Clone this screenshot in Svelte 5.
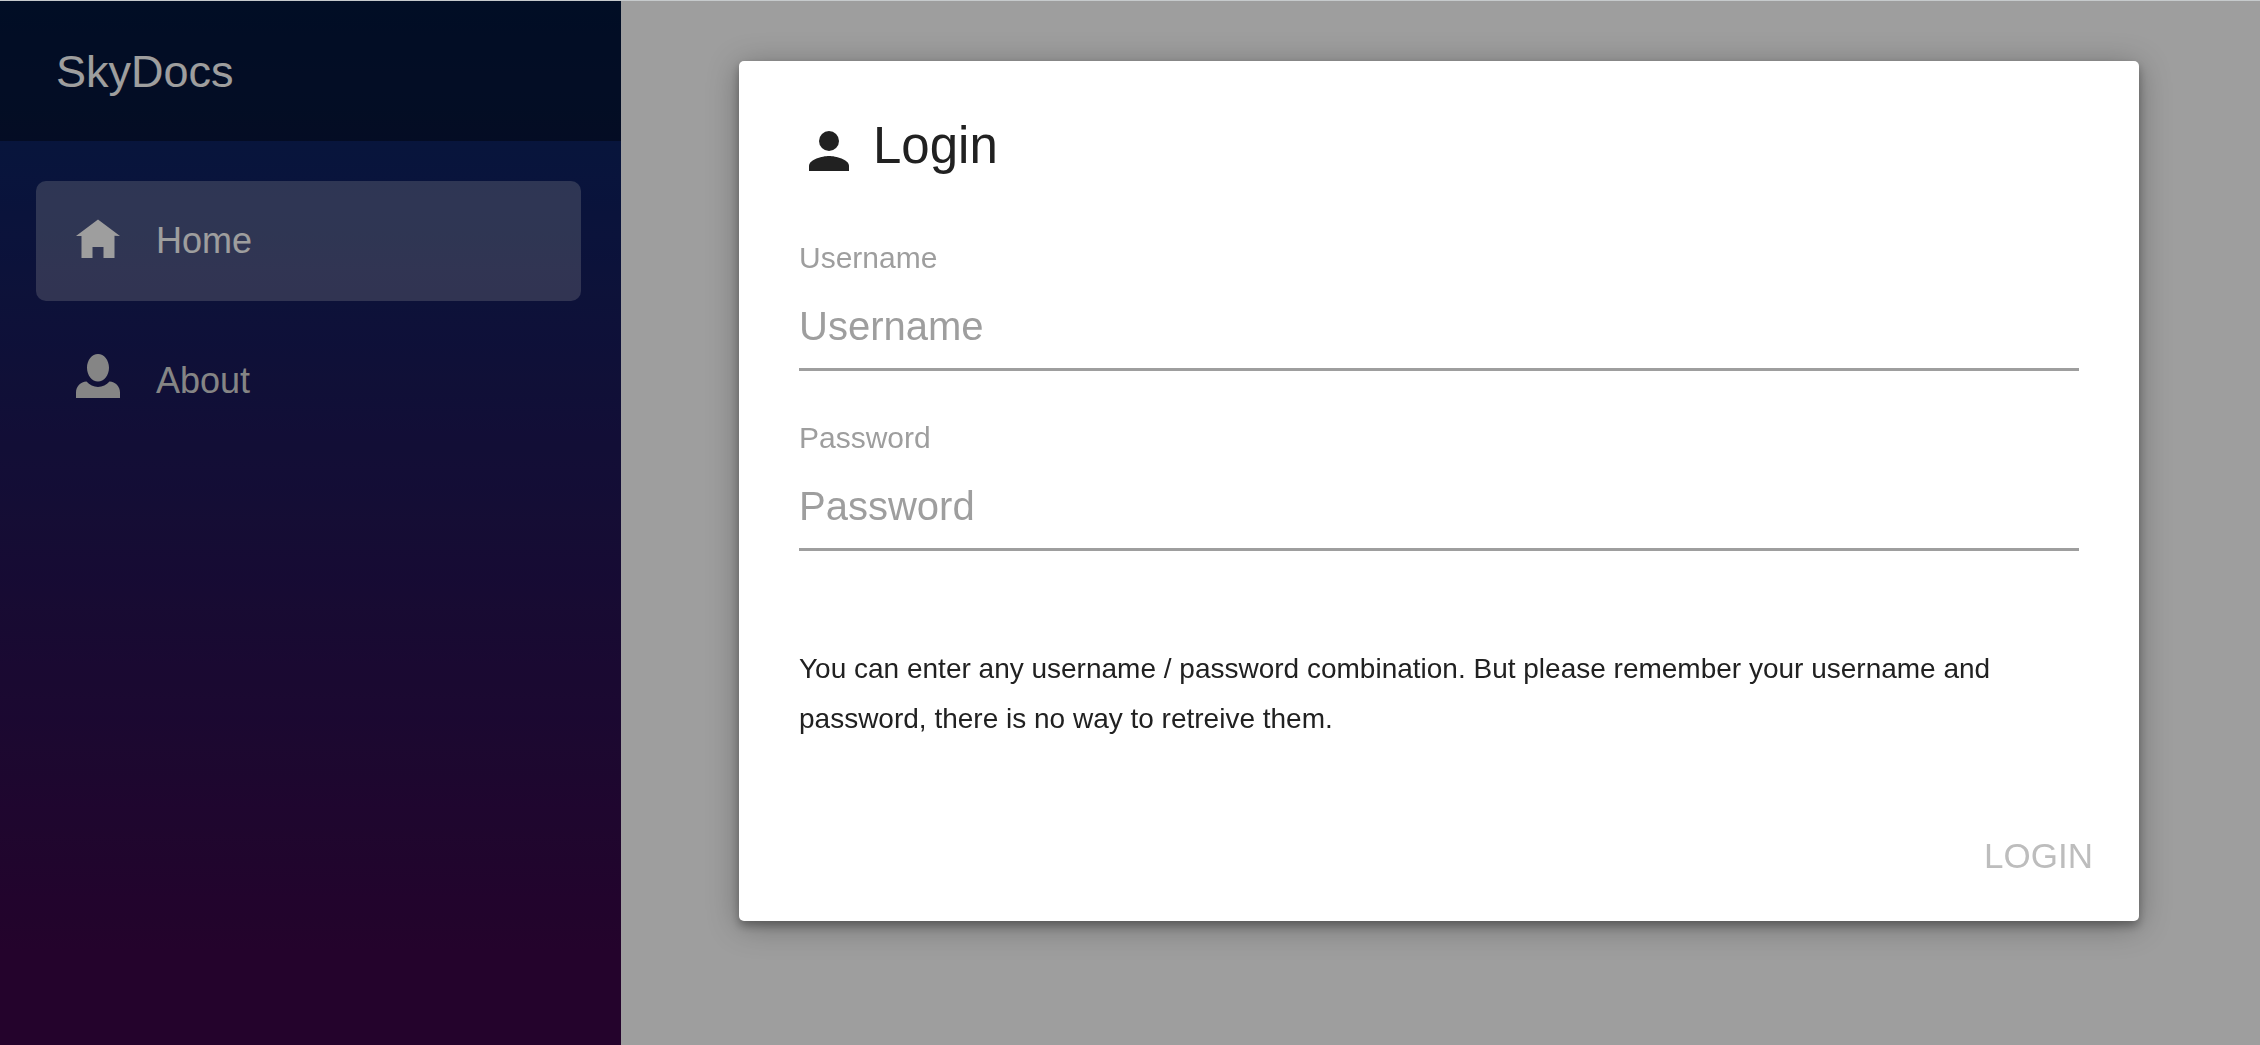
<script>
  let username = $state('');
  let password = $state('');
  const ready = $derived(username !== '' && password !== '');
</script>

<div class="page">
  <aside class="sidebar">
    <a class="brand" href="#home">SkyDocs</a>
    <nav>
      <a class="item active" href="#home" aria-current="page">
        <svg viewBox="0 -1 8 8" aria-hidden="true"><path d="M4 0l-4 3h1v4h2v-2h2v2h2v-4.03l1 .03-4-3z" /></svg>
        <span>Home</span>
      </a>
      <a class="item" href="#about">
        <svg viewBox="0 0 8 8" aria-hidden="true"><path d="M4 0c-1.1 0-2 1.12-2 2.5s.9 2.5 2 2.5 2-1.12 2-2.5-.9-2.5-2-2.5zm-2.09 5c-1.06.05-1.91.92-1.91 2v1h8v-1c0-1.08-.84-1.95-1.91-2-.54.61-1.28 1-2.09 1-.81 0-1.55-.39-2.09-1z" /></svg>
        <span>About</span>
      </a>
    </nav>
  </aside>

  <div class="backdrop"></div>

  <main>
    <form class="dialog" role="dialog" aria-labelledby="title" onsubmit={(e) => e.preventDefault()}>
      <header>
        <svg viewBox="0 0 24 24" aria-hidden="true"><circle cx="12" cy="8" r="4" /><path d="M12 14c-2.67 0-8 1.34-8 4v2h16v-2c0-2.66-5.33-4-8-4z" /></svg>
        <h1 id="title">Login</h1>
      </header>
      <div class="field">
        <label for="username">Username</label>
        <input id="username" type="text" placeholder="Username" bind:value={username} />
      </div>
      <div class="field">
        <label for="password">Password</label>
        <input id="password" type="password" placeholder="Password" bind:value={password} />
      </div>
      <p>You can enter any username / password combination. But please remember your username and password, there is no way to retreive them.</p>
      <footer>
        <button type="submit" disabled={!ready}>LOGIN</button>
      </footer>
    </form>
  </main>
</div>

<style>
  :global(body) {
    margin: 0;
    font-family: "Liberation Sans", Arial, sans-serif;
  }

  .page {
    display: flex;
    box-sizing: border-box;
    min-height: 100vh;
    border-top: 1px solid #c6cacc;
    background: #fff;
  }

  .sidebar {
    flex: 0 0 621px;
    background: linear-gradient(180deg, rgb(5, 39, 103) 0%, #3a0647 91%);
  }

  .brand {
    display: flex;
    align-items: center;
    box-sizing: border-box;
    height: 140px;
    padding: 2px 0 0 56px;
    background: rgba(0, 0, 0, 0.4);
    color: #fff;
    font-size: 45px;
    text-decoration: none;
  }

  nav {
    display: flex;
    flex-direction: column;
    gap: 20px;
    padding: 40px 40px 40px 36px;
  }

  .item {
    display: flex;
    align-items: center;
    gap: 36px;
    height: 120px;
    padding-left: 40px;
    border-radius: 10px;
    color: #d7d7d7;
    font-size: 36px;
    text-decoration: none;
  }

  .item.active {
    background: rgba(255, 255, 255, 0.25);
    color: #fff;
  }

  .item svg {
    width: 44px;
    height: 44px;
    margin-bottom: 10px;
    fill: currentColor;
  }

  .backdrop {
    position: fixed;
    inset: 1px 0 0;
    background: rgba(0, 0, 0, 0.38);
  }

  main {
    position: relative;
    flex: 1;
    min-width: 0;
    padding: 60px 121px 60px 118px;
  }

  .dialog {
    box-sizing: border-box;
    padding: 60px 60px 20px;
    border-radius: 5px;
    background: #fff;
    color: #212121;
    box-shadow:
      0 5px 10px rgba(0, 0, 0, 0.3),
      0 5px 32px rgba(0, 0, 0, 0.3);
  }

  header {
    display: flex;
    align-items: flex-start;
    gap: 14px;
    margin-bottom: 52px;
  }

  header svg {
    width: 60px;
    height: 60px;
    fill: currentColor;
  }

  h1 {
    margin: 0;
    font-size: 51px;
    font-weight: 400;
    line-height: 50px;
  }

  .field {
    display: flex;
    flex-direction: column;
    height: 138px;
    margin-bottom: 42px;
  }

  label {
    color: #9e9e9e;
    font-size: 30px;
    line-height: 50px;
  }

  input {
    box-sizing: border-box;
    width: 100%;
    height: 88px;
    padding: 2px 0 0;
    border: 0;
    border-bottom: 3px solid #9e9e9e;
    outline: 0;
    background: transparent;
    color: #212121;
    font-family: inherit;
    font-size: 40px;
  }

  input::placeholder {
    color: #9e9e9e;
    opacity: 1;
  }

  p {
    margin: 93px 0 0;
    font-size: 28px;
    line-height: 50px;
  }

  footer {
    display: flex;
    justify-content: flex-end;
    margin: 67px -30px 0 0;
  }

  button {
    height: 90px;
    padding: 0 16px;
    border: 0;
    background: transparent;
    color: #212121;
    font-family: inherit;
    font-size: 35px;
  }

  button:disabled {
    color: #bdbdbd;
  }
</style>
